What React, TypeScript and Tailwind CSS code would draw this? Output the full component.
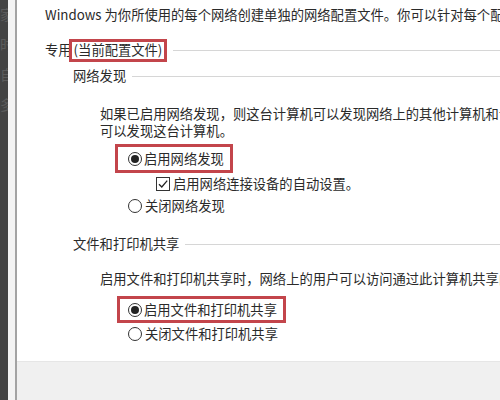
import React from "react";

const font = { fontFamily: '"Noto Sans CJK SC", "Noto Sans", sans-serif' };

function Radio({ checked }: { checked?: boolean }) {
  return (
    <span className="w-[14px] h-[14px] rounded-full border border-[#333] flex items-center justify-center bg-white shrink-0">
      {checked && <span className="w-[8px] h-[8px] rounded-full bg-[#222]" />}
    </span>
  );
}

function Checkbox() {
  return (
    <span className="w-[14px] h-[14px] border border-[#333] bg-white flex items-center justify-center shrink-0">
      <svg width="12" height="12" viewBox="0 0 12 12">
        <path d="M2 6.2 L4.8 9 L10.2 2.6" fill="none" stroke="#222" strokeWidth="1.3" />
      </svg>
    </span>
  );
}

function Header({ label, className = "" }: { label: React.ReactNode; className?: string }) {
  return (
    <div className={`flex items-center h-[20px] ${className}`}>
      <span className="shrink-0">{label}</span>
      <span className="flex-1 h-px bg-[#d6d6d6] ml-[6px]" />
    </div>
  );
}

export default function App() {
  return (
    <div className="w-[500px] h-[400px] flex overflow-hidden bg-white text-[13.3px] text-[#2a2a2a]" style={font}>
      <div className="w-[8px] bg-[#434343] overflow-hidden flex flex-col items-end text-[#5c5c5c] text-[14px] leading-none pt-[7px] gap-[16px]">
        <span className="-mr-[6px]">家</span>
        <span className="-mr-[6px]">时</span>
        <span className="-mr-[6px]">自</span>
        <span className="-mr-[6px]">多</span>
      </div>
      <div className="w-[7px] bg-[#f3f3f3]" />
      <div className="w-[2px] bg-[#a3a3a3]" />
      <div className="flex-1 flex flex-col min-w-0">
        <div className="h-[361px] pl-[28px] pt-[5px] whitespace-nowrap overflow-hidden">
          <div className="h-[20px] flex items-center">
            Windows 为你所使用的每个网络创建单独的网络配置文件。你可以针对每个配置文件选择特定的选项。
          </div>
          <Header
            className="mt-[15px]"
            label={
              <span className="flex items-center">
                专用
                <span className="-ml-[3px] border-[3px] border-[#c3454b] h-[23px] pl-[2px] pr-[2px] flex items-center">(当前配置文件)</span>
              </span>
            }
          />
          <div className="pl-[28px]">
            <Header className="mt-[6px]" label="网络发现" />
            <div className="pl-[27px] mt-[19px] leading-[17px]">
              <div>如果已启用网络发现，则这台计算机可以发现网络上的其他计算机和设备，而其他网络计算机也</div>
              <div>可以发现这台计算机。</div>
            </div>
            <div className="pl-[42px] mt-[5px]">
              <div className="inline-flex items-center gap-[2px] h-[29px] border-[3px] border-[#c3454b] pl-[10px] pr-[6px]">
                <Radio checked />
                <span>启用网络发现</span>
              </div>
            </div>
            <div className="pl-[83px] mt-[3px] h-[16px] flex items-center gap-[3px]">
              <Checkbox />
              <span>启用网络连接设备的自动设置。</span>
            </div>
            <div className="pl-[55px] mt-[6px] h-[16px] flex items-center gap-[3px]">
              <Radio />
              <span>关闭网络发现</span>
            </div>
            <Header className="mt-[20px]" label="文件和打印机共享" />
            <div className="pl-[27px] mt-[16px] h-[18px] flex items-center">
              启用文件和打印机共享时，网络上的用户可以访问通过此计算机共享的文件和打印机。
            </div>
            <div className="pl-[44px] mt-[8px]">
              <div className="inline-flex items-center gap-[2px] h-[27px] border-[3px] border-[#c3454b] pl-[8px] pr-[6px]">
                <Radio checked />
                <span>启用文件和打印机共享</span>
              </div>
            </div>
            <div className="pl-[55px] mt-[3px] h-[16px] flex items-center gap-[3px]">
              <Radio />
              <span>关闭文件和打印机共享</span>
            </div>
          </div>
        </div>
        <div className="flex-1 bg-[#f0f0f0] border-t border-[#e6e6e6]" />
      </div>
    </div>
  );
}
